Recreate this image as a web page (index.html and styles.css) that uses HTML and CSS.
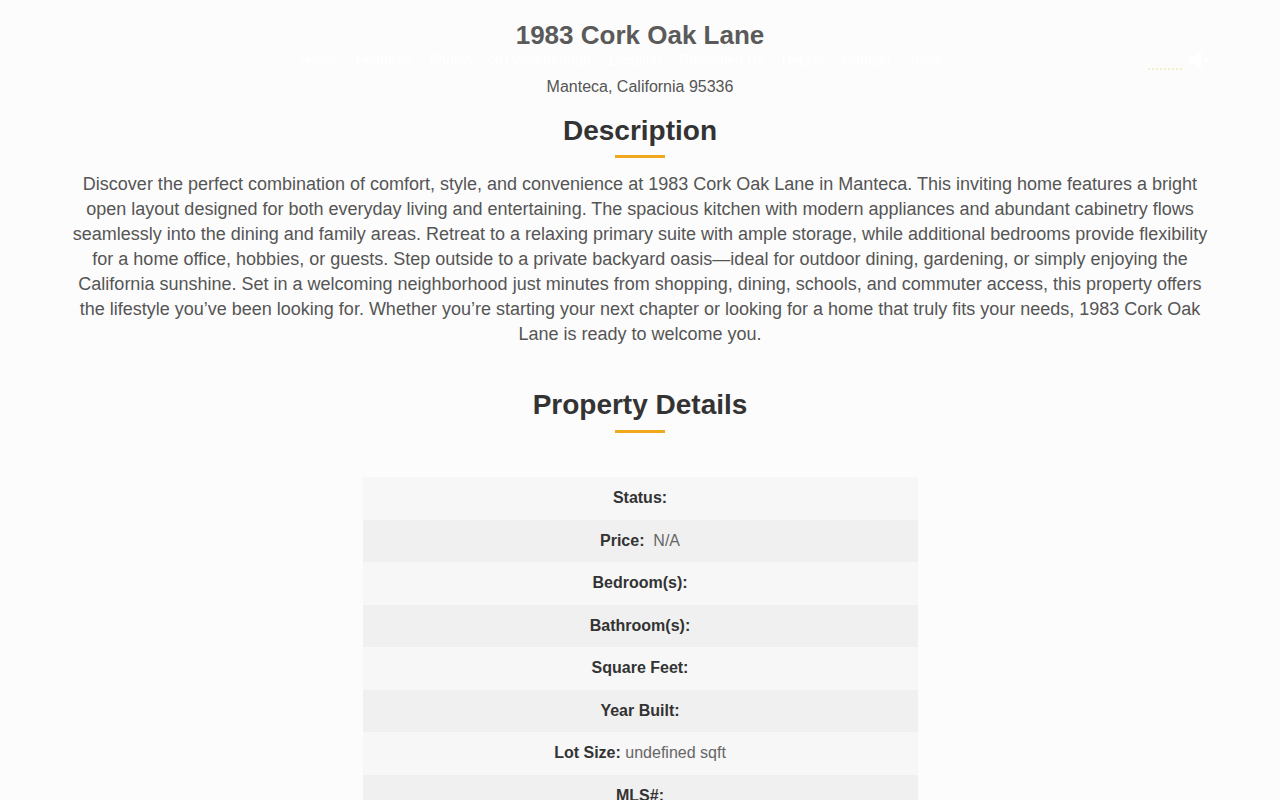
FILE: index.html
```html
<!DOCTYPE html>
<html lang="en">
<head>
<meta charset="utf-8">
<title>1983 Cork Oak Lane</title>
<link rel="stylesheet" href="styles.css">
</head>
<body>
<nav class="topnav">
  <ul class="menu">
    <li><a href="#">Home</a></li>
    <li><a href="#">Features</a></li>
    <li><a href="#">Photos</a></li>
    <li><a href="#">3D Walkthrough</a></li>
    <li><a href="#">Location</a></li>
    <li><a href="#">Presented By</a></li>
    <li><a href="#">Details</a></li>
    <li><a href="#">Contact</a></li>
    <li><a href="#">Tools</a></li>
  </ul>
  <div class="sound">
    <span class="sound-bar"></span>
    <svg class="sound-icon" width="24" height="22" viewBox="0 0 24 22">
      <path d="M2 7h5l6-5v18l-6-5H2z" fill="#ffffff"/>
      <path d="M16 8l5 5M21 8l-5 5" stroke="#ffffff" stroke-width="1.6"/>
    </svg>
  </div>
</nav>

<main class="page">
  <header class="hero">
    <h1 class="title">1983 Cork Oak Lane</h1>
    <p class="subtitle">Manteca, California 95336</p>
  </header>

  <section class="section description">
    <h2 class="section-title">Description</h2>
    <span class="rule"></span>
    <p class="desc-text">Discover the perfect combination of comfort, style, and convenience at 1983 Cork Oak Lane in Manteca. This inviting home features a bright open layout designed for both everyday living and entertaining. The spacious kitchen with modern appliances and abundant cabinetry flows seamlessly into the dining and family areas. Retreat to a relaxing primary suite with ample storage, while additional bedrooms provide flexibility for a home office, hobbies, or guests. Step outside to a private backyard oasis—ideal for outdoor dining, gardening, or simply enjoying the California sunshine. Set in a welcoming neighborhood just minutes from shopping, dining, schools, and commuter access, this property offers the lifestyle you’ve been looking for. Whether you’re starting your next chapter or looking for a home that truly fits your needs, 1983 Cork Oak Lane is ready to welcome you.</p>
  </section>

  <section class="section details">
    <h2 class="section-title">Property Details</h2>
    <span class="rule"></span>
    <ul class="detail-list">
      <li class="row"><strong>Status:</strong></li>
      <li class="row"><strong>Price:</strong>&nbsp; <span class="val">N/A</span></li>
      <li class="row"><strong>Bedroom(s):</strong></li>
      <li class="row"><strong>Bathroom(s):</strong></li>
      <li class="row"><strong>Square Feet:</strong></li>
      <li class="row"><strong>Year Built:</strong></li>
      <li class="row"><strong>Lot Size:</strong> <span class="val">undefined sqft</span></li>
      <li class="row"><strong>MLS#:</strong></li>
    </ul>
  </section>
</main>
</body>
</html>
```

FILE: styles.css
```css
html, body {
  margin: 0;
  padding: 0;
}

body {
  background: #fcfcfc;
  font-family: "Liberation Sans", Arial, sans-serif;
  color: #555555;
}

.topnav {
  position: fixed;
  top: 0;
  left: 0;
  right: 0;
  height: 120px;
  display: flex;
  justify-content: center;
  align-items: flex-start;
  padding-right: 38px;
  z-index: 10;
}

.menu {
  list-style: none;
  margin: 0;
  padding: 51px 0 0;
  display: flex;
}

.menu li a {
  display: block;
  padding: 0 9px;
  font-size: 14px;
  line-height: 18px;
  color: #ffffff;
  text-decoration: none;
}

.sound {
  position: absolute;
  top: 49px;
  right: 68px;
  display: flex;
  align-items: flex-end;
  gap: 6px;
}

.sound-bar {
  width: 34px;
  height: 0;
  border-top: 2px dotted #f3efc6;
  margin-bottom: 1px;
}

.sound-icon {
  display: block;
}

.page {
  max-width: 1140px;
  margin: 0 auto;
  padding: 20px 0 0;
  text-align: center;
}

.title {
  margin: 0;
  font-size: 26px;
  line-height: 30px;
  font-weight: bold;
  color: #5a5a5a;
}

.subtitle {
  margin: 27px 0 0;
  font-size: 16px;
  line-height: 20px;
  color: #555555;
}

.section {
  display: flex;
  flex-direction: column;
  align-items: center;
}

.description {
  margin-top: 18px;
}

.section-title {
  margin: 0;
  font-size: 28px;
  line-height: 32px;
  font-weight: bold;
  color: #333333;
}

.rule {
  display: block;
  width: 50px;
  height: 3px;
  background: #f0a81c;
  margin-top: 8px;
}

.desc-text {
  margin: 14px 0 0;
  font-size: 18px;
  line-height: 25px;
  color: #555555;
}

.details {
  margin-top: 42px;
}

.details .rule {
  margin-top: 9px;
}

.detail-list {
  list-style: none;
  margin: 44px 0 0;
  padding: 0;
  width: 555px;
}

.row {
  padding: 12px 10px;
  font-size: 16px;
  line-height: 18.5px;
  color: #333333;
  background: #f7f7f7;
}

.row:nth-child(even) {
  background: #f0f0f0;
}

.row strong {
  font-weight: bold;
  color: #333333;
}

.row .val {
  color: #666666;
}
```
